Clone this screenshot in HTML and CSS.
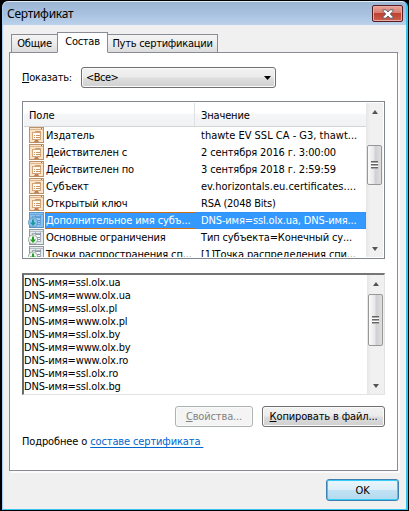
FILE: index.html
```html
<!DOCTYPE html>
<html lang="ru">
<head>
<meta charset="utf-8">
<title>Сертификат</title>
<link rel="stylesheet" href="styles.css">
</head>
<body>
<svg class="defs" width="0" height="0">
  <defs>
    <symbol id="field" viewBox="0 0 15 16">
      <rect x=".5" y=".5" width="14" height="15" fill="#fbe3c8" stroke="#bd9068"/>
      <path d="M1 2.500H14" stroke="#e0b68e"/>
      <path d="M12 1.500h1" stroke="#a8703f"/>
      <rect x="3.500" y="5.500" width="8" height="7" fill="#fffaf2" stroke="#d2a47a"/>
      <path d="M6.500 5V4.500h5V6M5 8.500h1M7 8.500h4M5 10.500h1M7 10.500h4" fill="none" stroke="#c8976a"/>
      <path d="M5 15l1-2h3l1 2z" fill="#ba8256"/>
    </symbol>
    <symbol id="ext" viewBox="0 0 16 16">
      <rect x="1.500" y=".5" width="14" height="15" fill="#e4e9ed" stroke="#92999f"/>
      <path d="M2 2.500H15" stroke="#b4bdc4"/>
      <rect x="4.500" y="4.500" width="8" height="8" fill="#f8fafb" stroke="#a7b1b9"/>
      <path d="M7.500 3.500v2h5v-2M8 8.500h4M8 10.500h4" fill="none" stroke="#8a97a4"/>
      <circle cx="5" cy="10.500" r="4.600" fill="#f2f5f2" stroke="#8b948c" stroke-width=".8"/>
      <path d="M4 7.500h2v3h2.200L5 14 1.800 10.500H4z" fill="#27a12d"/>
    </symbol>
    <symbol id="ext-selected" viewBox="0 0 16 16">
      <rect x="1.500" y=".5" width="14" height="15" fill="#8ac0f0" stroke="#5c97c9"/>
      <path d="M2 2.500H15" stroke="#6aa8dd"/>
      <rect x="4.500" y="4.500" width="8" height="8" fill="#98caf6" stroke="#66a4d8"/>
      <path d="M7.500 3.500v2h5v-2M8 8.500h4M8 10.500h4" fill="none" stroke="#5a97ce"/>
      <circle cx="5" cy="10.500" r="4.600" fill="#8ec5ee" stroke="#5592bb" stroke-width=".8"/>
      <path d="M4 7.500h2v3h2.200L5 14 1.800 10.500H4z" fill="#2296a0"/>
    </symbol>
  </defs>
</svg>
<div class="window">
  <header class="titlebar">
    <span class="title">Сертификат</span>
    <button class="close" aria-label="Закрыть"><svg width="12" height="10" viewBox="0 0 12 10"><path d="M1 .8h3L6 3 8 .8h3v1.400L8.300 5 11 7.800v1.400H8L6 7 4 9.200H1V7.800L3.700 5 1 2.200z" fill="#fff" stroke="#535666" stroke-width=".9"/></svg></button>
  </header>
  <main class="client">
    <nav class="tabs">
      <span class="tab t1">Общие</span><span class="tab active">Состав</span><span class="tab t3">Путь сертификации</span>
    </nav>
    <section class="panel">
      <div class="filter"><label><u>П</u>оказать:</label><div class="combo"><span>&lt;Все&gt;</span><svg width="7" height="4"><path d="M0 0h7L3.500 4z" fill="#000"/></svg></div></div>
      <div class="list">
        <div class="table">
          <div class="head"><span class="field">Поле</span><span class="value">Значение</span></div>
          <div class="row"><svg class="icon"><use href="#field"/></svg><span class="name">Издатель</span><span class="value wide">thawte EV SSL CA - G3, thawt...</span></div>
          <div class="row"><svg class="icon"><use href="#field"/></svg><span class="name">Действителен с</span><span class="value">2 сентября 2016 г. 3:00:00</span></div>
          <div class="row"><svg class="icon"><use href="#field"/></svg><span class="name">Действителен по</span><span class="value">3 сентября 2018 г. 2:59:59</span></div>
          <div class="row"><svg class="icon"><use href="#field"/></svg><span class="name">Субъект</span><span class="value wide">ev.horizontals.eu.certificates....</span></div>
          <div class="row"><svg class="icon"><use href="#field"/></svg><span class="name">Открытый ключ</span><span class="value tight">RSA (2048 Bits)</span></div>
          <div class="row selected"><svg class="icon ext"><use href="#ext-selected"/></svg><span class="name">Дополнительное имя субъ...</span><span class="value">DNS-имя=ssl.olx.ua, DNS-имя...</span></div>
          <div class="row"><svg class="icon ext"><use href="#ext"/></svg><span class="name">Основные ограничения</span><span class="value">Тип субъекта=Конечный су...</span></div>
          <div class="row"><svg class="icon ext"><use href="#ext"/></svg><span class="name">Точки распространения сп...</span><span class="value">[1]Точка распределения спи...</span></div>
        </div>
        <div class="scroll"><i class="up"></i><b class="thumb"></b><i class="down"></i></div>
      </div>
      <div class="details">
        <div class="lines"><p>DNS-имя=ssl.olx.ua</p><p>DNS-имя=www.olx.ua</p><p>DNS-имя=ssl.olx.pl</p><p>DNS-имя=www.olx.pl</p><p>DNS-имя=ssl.olx.by</p><p>DNS-имя=www.olx.by</p><p>DNS-имя=www.olx.ro</p><p>DNS-имя=ssl.olx.ro</p><p>DNS-имя=ssl.olx.bg</p></div>
        <div class="scroll"><i class="up"></i><b class="thumb"></b><i class="down"></i></div>
      </div>
      <div class="actions"><button class="btn props" disabled><span><u>С</u>войства...</span></button><button class="btn copy"><span><u>К</u>опировать в файл...</span></button></div>
      <p class="more">Подробнее о <a href="#">составе сертификата&nbsp;</a></p>
    </section>
    <footer><button class="btn ok">OK</button></footer>
  </main>
</div>
</body>
</html>
```
FILE: styles.css
```css
* { box-sizing: border-box; }
html, body { margin: 0; background: #000; overflow: hidden; }
body, button { font: 11px/13px "DejaVu Sans Condensed", "DejaVu Sans", sans-serif; font-stretch: condensed; letter-spacing: -.2px; color: #000; }
body { width: 409px; height: 511px; padding: 1px 1px 1px 2px; white-space: nowrap; }
button, p { margin: 0; padding: 0; }
.defs { display: block; position: absolute; }
u { text-underline-offset: 1px; }
.window { height: 509px; border: 1px solid #a9cdf0; border-top-color: #e0edf9; border-right: 2px solid #35c4ee; border-bottom: 1px solid #35c4ee; border-radius: 6px 6px 0 0; background: #f0f0f0; overflow: hidden; display: flex; flex-direction: column; }
.titlebar { height: 23px; background: linear-gradient(#9bb6d3, #a7c1df 50%, #bad1ea); display: flex; justify-content: space-between; align-items: flex-start; padding: 3px 3px 0 4px; }
.title { font: 12px/18px "Noto Sans", sans-serif; letter-spacing: -.28px; }
.close { width: 31px; height: 17px; border: 1px solid #561c24; border-radius: 2px; box-shadow: inset 0 0 0 1px #e9aca4; background: linear-gradient(#e9a59a, #d77c6d 47%, #bd4130 50%, #cc5f4e); display: grid; place-items: center; }
.client { border-left: 1px solid #e6eef7; flex: 1; padding: 7px 7px 0 5px; }
.tabs { display: flex; align-items: flex-end; height: 21px; padding-left: 2px; position: relative; margin-bottom: -1px; letter-spacing: -.26px; }
.tab { height: 19px; border: 1px solid #898c95; background: linear-gradient(#f4f4f4, #ececec 50%, #dcdcdc); line-height: 18px; text-align: center; }
.t1 { width: 46px; border-right: 0; }
.t3 { width: 110px; border-left: 0; }
.active { width: 51px; height: 21px; background: #fff; border-bottom-color: #fff; line-height: 17px; }
.panel { height: 419px; border: 1px solid #898c95; background: #fff; box-shadow: 2px 2px 0 #fbfbfb; padding: 14px 12px 0 12px; width: 389px; }
.filter { display: flex; align-items: center; justify-content: space-between; width: 254px; height: 21px; }
.combo { width: 195px; height: 21px; border: 1px solid #707070; border-radius: 3px; box-shadow: inset 0 0 0 1px #fafafa; background: linear-gradient(#f2f2f2, #ebebeb 48%, #dedede 52%, #d0d0d0); display: flex; align-items: center; justify-content: space-between; padding: 0 4px; letter-spacing: -.5px; }
.list { height: 158px; margin-top: 13px; border: 1px solid #828790; padding: 1px; display: flex; }
.table { width: 342px; overflow: hidden; flex: none; letter-spacing: -.14px; }
.head { height: 24px; border-bottom: 1px solid #d5d5d5; background: linear-gradient(#fff 45%, #f4f6f8 50%, #f0f2f4); display: flex; line-height: 25px; }
.head .field { width: 171px; padding-left: 5px; border-right: 1px solid #dde1e6; }
.head .value { padding-left: 6px; }
.row { height: 17px; display: flex; line-height: 17px; }
.icon { width: 15px; height: 16px; margin: 0 1px 0 5px; flex: none; }
.icon.ext { width: 16px; margin-left: 4px; }
.name { width: 150px; padding-left: 1px; flex: none; }
.row .value { flex: 1; padding-left: 6px; }
.row .wide { letter-spacing: 0; }
.row .tight { letter-spacing: -.22px; }
.selected .name, .selected .value { background: #3399ff; color: #fff; border: 1px dotted #c96a12; line-height: 15px; }
.selected .name { padding-left: 0; border-right: 0; }
.selected .value { border-left: 0; }
.scroll { width: 17px; height: 100%; flex: none; background: linear-gradient(90deg, #e6e6e6, #f1f1f1 25%, #f0f0f0); display: flex; flex-direction: column; align-items: center; }
.up, .down { border: 0 solid transparent; width: 0; height: 0; flex: none; }
.up { border-width: 0 3.500px 4px; border-bottom-color: #555; margin-top: 7px; }
.down { border-width: 4px 3.500px 0; border-top-color: #555; margin: auto 0 6px; }
.thumb { width: 15px; height: 40px; margin-top: 31px; border: 1px solid #979797; border-radius: 2px; background: repeating-linear-gradient(#666 0 1px, #aaa 1px 2px, #fff 2px 3px) center/7px 8px no-repeat, linear-gradient(90deg, #fafafa, #e7e7e9 45%, #cfd0d4 55%, #dedede); flex: none; }
.details { height: 122px; margin-top: 14px; border: 2px solid #696969; border-top-color: #767676; border-right: 1px solid #e3e3e3; border-bottom: 1px solid #e3e3e3; display: flex; justify-content: space-between; }
.details .lines { padding-top: 1px; overflow: hidden; letter-spacing: -.16px; }
.details .thumb { height: 52px; margin-top: 8px; }
.actions { display: flex; justify-content: flex-end; gap: 9px; margin-top: 11px; }
.btn { height: 21px; border: 1px solid #707070; border-radius: 3px; background: linear-gradient(#f2f2f2, #ebebeb 48%, #dddddd 52%, #cfcfcf); box-shadow: inset 0 0 0 1px #fafafa; text-align: center; letter-spacing: -.14px; }
.props { width: 78px; background: #f4f4f4; border-color: #adb2b5; color: #838383; }
.copy { width: 123px; }
.more { margin-top: 8px; letter-spacing: -.13px; }
.more a { color: #0066cc; text-underline-offset: 2px; }
footer { display: flex; justify-content: flex-end; padding-top: 8px; }
.ok { width: 73px; height: 22px; border-color: #3c7fb1; box-shadow: inset 0 0 0 1px #33cdf8; background: linear-gradient(#eaf5fb, #dceff9 48%, #c1e2f4 52%, #b2d9ee); }
```
